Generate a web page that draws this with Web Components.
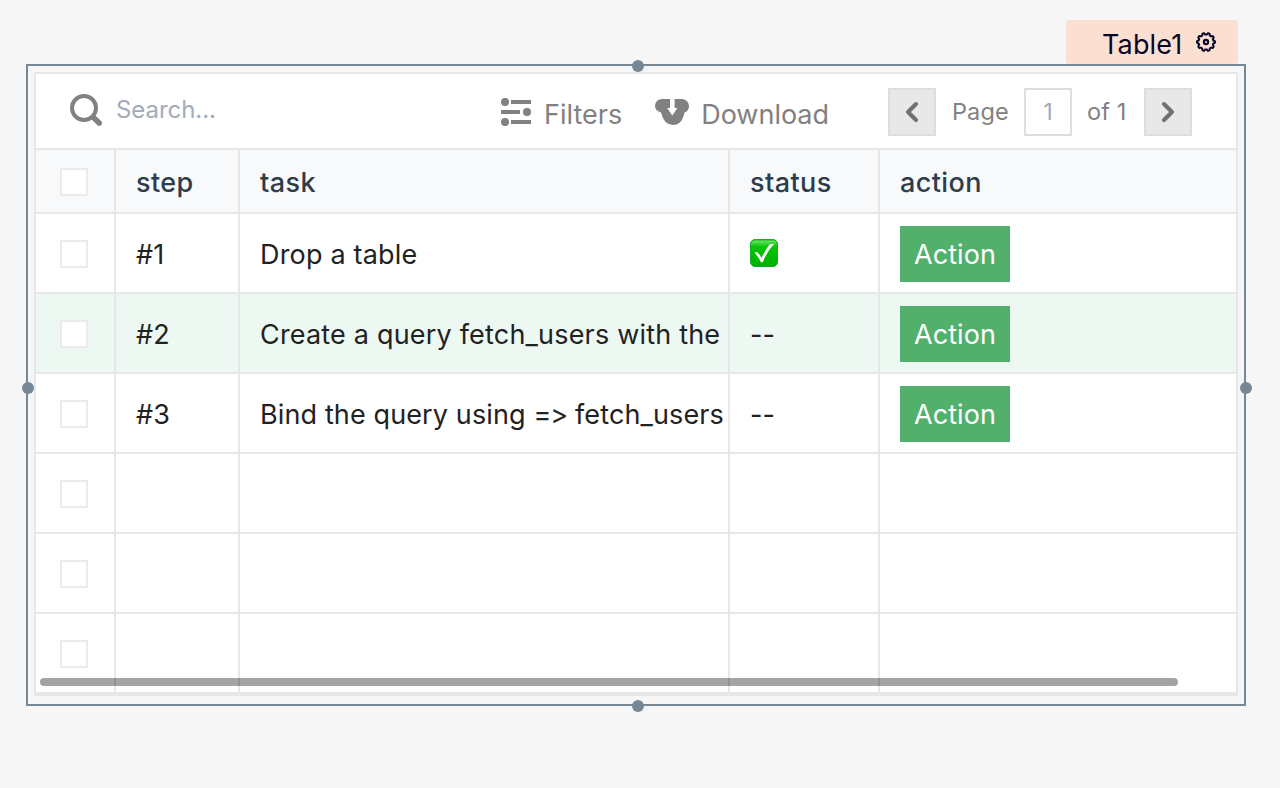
<!DOCTYPE html>
<html lang="en">
<head>
<meta charset="utf-8">
<title>Table1</title>
<style>
html,body{margin:0;height:100%;background:#f6f6f6;overflow:hidden}
body{font-family:Inter,"Liberation Sans",sans-serif;font-variant-ligatures:none;font-feature-settings:"calt" 0}
</style>
</head>
<body>
<widget-canvas>
  <widget-label slot="label">Table1</widget-label>
  <data-table></data-table>
</widget-canvas>
<script>
function define(name, html, init) {
  customElements.define(name, class extends HTMLElement {
    connectedCallback() {
      if (this.shadowRoot) return;
      const root = this.attachShadow({mode: 'open'});
      const t = document.createElement('template');
      t.innerHTML = html;
      root.append(t.content.cloneNode(true));
      if (init) init.call(this, root);
    }
  });
}

define('widget-label', `<style>
:host{display:flex;align-items:center;box-sizing:border-box;width:172px;height:44px;padding:6px 0 0 36px;background:#fbe0d2;border-radius:4px;color:#090526;font-size:27px;line-height:40px;letter-spacing:.15px}
svg{margin:-6px 0 0 13px;flex:none}
</style><slot></slot>
<svg width="22" height="22" viewBox="-11 -11 22 22" fill="none" stroke="#090526"><path id="g" stroke-width="2" stroke-linejoin="round"/><circle r="2.1" stroke-width="2.2"/></svg>`, function (root) {
  let d = '';
  for (let i = 0; i < 120; i++) {
    const a = i * Math.PI / 60;
    const r = 8.2 + .8 * Math.tanh(2.5 * Math.cos(10 * a + Math.PI));
    d += (i ? 'L' : 'M') + (r * Math.sin(a)).toFixed(2) + ' ' + (r * Math.cos(a)).toFixed(2);
  }
  root.getElementById('g').setAttribute('d', d + 'Z');
});

define('widget-canvas', `<style>
:host{display:flex;flex-direction:column;box-sizing:border-box;width:1280px;height:788px;padding:20px 34px 0 26px}
header{display:flex;justify-content:flex-end;padding-right:8px}
main{position:relative;box-sizing:border-box;height:642px;border:2px solid #768896;padding:6px}
i{position:absolute;width:12px;height:12px;border-radius:50%;background:#768896}
.t{left:604px;top:-6px}.b{left:604px;bottom:-8px}.l{left:-6px;top:316px}.r{right:-8px;top:316px}
</style><header><slot name="label"></slot></header>
<main><slot></slot><i class="t"></i><i class="b"></i><i class="l"></i><i class="r"></i></main>`);

define('check-box', `<style>:host{display:block;box-sizing:border-box;width:28px;height:28px;border:2px solid #ebebeb;background:#fff}</style>`);

define('action-button', `<style>:host{display:flex;align-items:center;justify-content:center;box-sizing:border-box;width:110px;height:56px;background:#52b06c;color:#fff;letter-spacing:.05px;padding-top:2px;margin-top:-2px}</style><slot></slot>`);

define('done-mark', `<style>:host{display:block;width:28px;height:28px}svg{display:block}</style>
<svg width="28" height="28" viewBox="0 0 28 28"><defs><linearGradient id="a" x2="0" y2="1"><stop stop-color="#00b800"/><stop offset=".07" stop-color="#5de05d"/><stop offset=".22" stop-color="#1bcb1b"/><stop offset=".3" stop-color="#00c600"/><stop offset="1" stop-color="#00b000"/></linearGradient></defs><rect x=".4" y=".4" width="27.2" height="27.2" rx="5" fill="url(#a)" stroke="#009b16" stroke-width=".9"/><path d="M4.4 14.1Q6 12.2 7.7 13.4Q10 15.5 11.5 19Q15.5 10.2 20 5H24Q17 12.5 12.8 23.2H11Q8.5 17.5 4.4 14.1Z" fill="#fff"/></svg>`);

define('tool-button', `<style>:host{display:flex;align-items:center;gap:11px;color:#828080;font-size:27px;line-height:34px}::slotted(svg){margin-top:-4px}</style><slot name="icon"></slot><slot></slot>`);

define('page-arrow', `<style>:host{display:grid;place-items:center;box-sizing:border-box;width:48px;height:48px;border:2px solid #dedede;background:#e8e8e8}:host([next]) svg{transform:scaleX(-1)}</style>
<svg width="44" height="44" viewBox="0 0 44 44" fill="none" stroke="#716f6f" stroke-width="4" stroke-linecap="round" stroke-linejoin="round"><path d="M26 14L18 22L26 30"/></svg>`);

define('table-toolbar', `<style>
:host{display:flex;height:74px;border-bottom:2px solid #e7e7e7;box-sizing:content-box;color:#828080}
svg{display:block;flex:none}
.search{display:flex;align-items:center;width:464px;padding-left:32px;gap:13px;box-sizing:border-box;font-size:24px;color:#a1acb8}
.search svg{margin-top:-4px}
.search span{padding-bottom:2px;letter-spacing:-.05px}
.tools{display:flex;gap:33px;padding-top:8px;width:388px;box-sizing:border-box}
.pager{display:flex;align-items:center;font-size:23.5px;padding-top:2px;line-height:30px}
.n{display:grid;place-items:center;box-sizing:border-box;width:48px;height:48px;border:2px solid #dedede;color:#a1acb8}
.p{width:88px;padding-left:16px;box-sizing:border-box;letter-spacing:.1px}.o{width:72px;padding-left:15px;box-sizing:border-box;letter-spacing:.15px}
</style>
<div class="search"><svg width="35" height="34" viewBox="0 0 35 34" fill="none" stroke="#828080"><circle cx="16" cy="16" r="12" stroke-width="4"/><path d="M25.5 25.5L31.2 31" stroke-width="5.5" stroke-linecap="round"/></svg><span>Search...</span></div>
<div class="tools">
<tool-button><svg slot="icon" width="33" height="30" viewBox="0 0 33 30" fill="#828080"><circle cx="5" cy="4" r="4"/><circle cx="27" cy="14" r="4"/><circle cx="5" cy="24" r="4"/><path d="M11 2h20v4H11zM1 12h19v4H1zM11 22h20v4H11z"/></svg>Filters</tool-button>
<tool-button><svg slot="icon" width="35" height="30" viewBox="0 0 35 30"><path d="M7.5 1H27.5A7 7 0 0 1 34 8Q34 13 29.5 14.5Q27 27 18 27Q9 27 6 14.5Q0 12.5 0 8A7 7 0 0 1 7.5 1Z" fill="#828080"/><path d="M15 0V10H12.2L17.3 17.4L22.4 10H19.6V0Z" fill="#fff"/></svg>Download</tool-button>
</div>
<div class="pager"><page-arrow></page-arrow><span class="p">Page</span><span class="n">1</span><span class="o">of 1</span><page-arrow next></page-arrow></div>`);

define('table-row', `<style>
:host{display:grid;grid-template-columns:80px 124px 490px 150px 1fr;height:78px;border-bottom:2px solid #e7e7e7;background:#fff;letter-spacing:.19px}
:host([selected]){background:#edf8f2}
:host([head]){height:62px;background:#f8f9fb;font-weight:500;color:#2f3c4b;letter-spacing:.4px}
:host([last]){border-bottom:0}
div{display:flex;align-items:center;border-right:2px solid #e7e7e7;padding:4px 0 0 20px;white-space:nowrap;overflow:hidden;box-sizing:border-box;min-width:0}
div:first-of-type{padding:2px 0 0 24px}div:last-of-type{border-right:0}
</style><div><check-box></check-box></div><div><slot name="step"></slot></div><div><slot name="task"></slot></div><div><slot name="status"></slot></div><div><slot name="action"></slot></div>`);

define('data-table', `<style>
:host{display:block;position:relative;box-sizing:border-box;height:624px;width:1204px;border:2px solid #e7e7e7;border-bottom-width:4px;background:#fff;color:#222;font-size:27px;line-height:34px}
.bar{position:absolute;left:4px;top:604px;width:1138px;height:8px;border-radius:4px;background:rgba(0,0,0,.36)}
.bind{letter-spacing:.12px}.arrow{letter-spacing:-.9px}
done-mark{margin-top:-4px}
</style><table-toolbar></table-toolbar>
<table-row head><span slot="step">step</span><span slot="task">task</span><span slot="status">status</span><span slot="action">action</span></table-row>
<table-row><span slot="step">#1</span><span slot="task">Drop a table</span><done-mark slot="status"></done-mark><action-button slot="action">Action</action-button></table-row>
<table-row selected><span slot="step">#2</span><span slot="task">Create a query fetch_users with the</span><span slot="status">--</span><action-button slot="action">Action</action-button></table-row>
<table-row><span slot="step">#3</span><span slot="task" class="bind">Bind the query using <span class="arrow">=&gt;</span> fetch_users</span><span slot="status">--</span><action-button slot="action">Action</action-button></table-row>
<table-row></table-row><table-row></table-row><table-row last></table-row>
<div class="bar"></div>`);
</script>
</body>
</html>
